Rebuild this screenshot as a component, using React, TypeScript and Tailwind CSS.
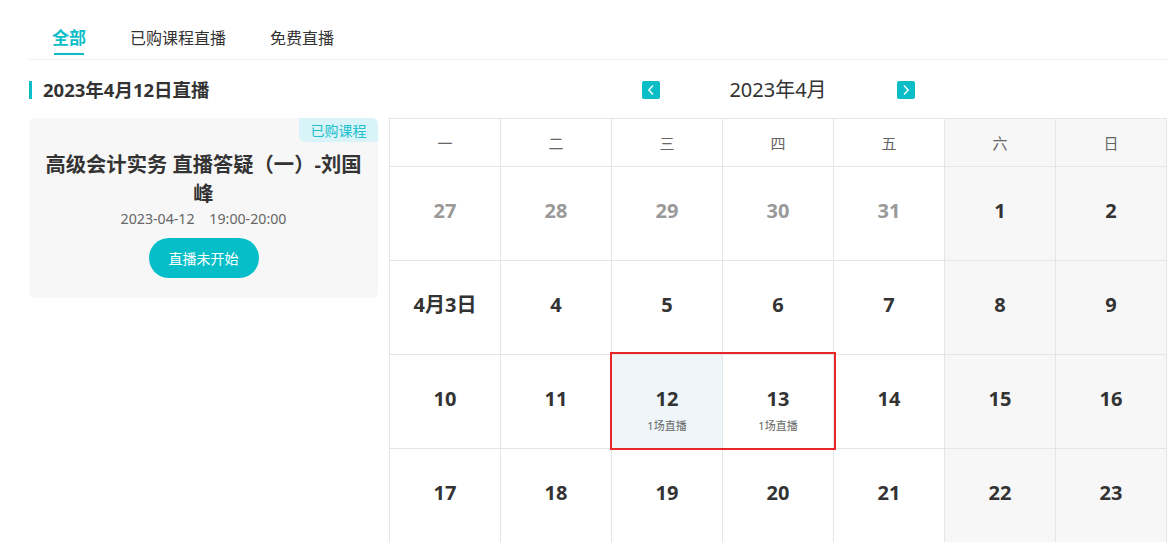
const weekDays = ['一', '二', '三', '四', '五', '六', '日']

type Day = { label: string; muted?: boolean; live?: string; active?: boolean }

const days: Day[] = [
  { label: '27', muted: true },
  { label: '28', muted: true },
  { label: '29', muted: true },
  { label: '30', muted: true },
  { label: '31', muted: true },
  { label: '1' },
  { label: '2' },
  { label: '4月3日' },
  { label: '4' },
  { label: '5' },
  { label: '6' },
  { label: '7' },
  { label: '8' },
  { label: '9' },
  { label: '10' },
  { label: '11' },
  { label: '12', live: '1场直播', active: true },
  { label: '13', live: '1场直播' },
  { label: '14' },
  { label: '15' },
  { label: '16' },
  { label: '17' },
  { label: '18' },
  { label: '19' },
  { label: '20' },
  { label: '21' },
  { label: '22' },
  { label: '23' },
]

const Chevron = ({ dir }: { dir: 'left' | 'right' }) => (
  <button className="w-[18px] h-[18px] rounded-[2px] bg-[#0bbdc7] flex items-center justify-center">
    <svg width="10" height="12" viewBox="0 0 10 12" fill="none">
      <path
        d={dir === 'left' ? 'M7 1.5 L2.8 6 L7 10.5' : 'M3 1.5 L7.2 6 L3 10.5'}
        stroke="white"
        strokeWidth="1.4"
      />
    </svg>
  </button>
)

const App = () => {
  return (
    <div
      className="w-[1169px] h-[542px] overflow-hidden bg-white text-[#333] pl-[29px] pr-[2px]"
      style={{ fontFamily: '"Noto Sans", "Noto Sans CJK SC", sans-serif' }}
    >
      {/* tabs */}
      <div className="h-[60px] flex items-end gap-[44px] pl-[23px] border-b border-[#eeeeee]">
        <div className="relative pb-[4px] text-[17px] font-bold text-[#0bbdc7] leading-[28px]">
          全部
          <div className="h-[2px] bg-[#0bbdc7] mx-[2px] mt-[1px]"></div>
        </div>
        <div className="pb-[7px] text-[16px] leading-[28px] text-[#333]">已购课程直播</div>
        <div className="pb-[7px] text-[16px] leading-[28px] text-[#333]">免费直播</div>
      </div>

      <div className="flex gap-[11px] pt-[21px]">
        {/* left */}
        <div className="w-[349px] shrink-0">
          <div className="flex items-center h-[18px] border-l-[3px] border-[#0bbdc7] pl-[11px]">
            <span className="text-[18.5px] font-bold leading-none text-[#333]">2023年4月12日直播</span>
          </div>
          <div className="mt-[19px] relative bg-[#f7f7f7] rounded-[6px] pt-[32px] pb-[20px] px-[12px] flex flex-col items-center">
            <div className="absolute top-0 right-0 w-[79px] h-[24px] bg-[#d9f4f8] rounded-tr-[6px] rounded-bl-[6px] text-[#20bfcb] text-[14px] flex items-center justify-center">
              已购课程
            </div>
            <div className="text-[20.3px] font-bold text-[#333] leading-[29px] text-center">
              高级会计实务 直播答疑（一）-刘国峰
            </div>
            <div className="text-[14.2px] text-[#666] leading-[20px] mt-[1px]">
              2023-04-12&nbsp;&nbsp;&nbsp;&nbsp;19:00-20:00
            </div>
            <button className="mt-[9px] w-[110px] h-[40px] rounded-full bg-[#06bec8] text-white text-[14px]">
              直播未开始
            </button>
          </div>
        </div>

        {/* calendar */}
        <div className="flex-1">
          <div className="h-[18px] flex items-center justify-center">
            <Chevron dir="left" />
            <div className="w-[237px] text-center text-[20px] text-[#333] leading-none">2023年4月</div>
            <Chevron dir="right" />
          </div>
          <div className="relative mt-[19px]">
            <div className="grid grid-cols-7 border-l border-t border-[#e5e5e5]">
              {weekDays.map((w, i) => (
                <div
                  key={w}
                  className={`h-[48px] flex items-center justify-center border-r border-b border-[#e5e5e5] text-[15px] text-[#666] pt-[2px] ${
                    i >= 5 ? 'bg-[#f7f7f7]' : 'bg-white'
                  }`}
                >
                  {w}
                </div>
              ))}
              {days.map((d, i) => {
                const weekend = i % 7 >= 5
                return (
                  <div
                    key={i}
                    className={`h-[94px] flex items-center justify-center border-r border-b border-[#e5e5e5] ${
                      d.active ? 'bg-[#eef6f9]' : weekend ? 'bg-[#f7f7f7]' : 'bg-white'
                    }`}
                  >
                    <div className="relative mb-[5px]">
                      <div
                        className={`text-[20px] font-bold leading-[28px] ${
                          d.muted ? 'text-[#999]' : 'text-[#333]'
                        }`}
                      >
                        {d.label}
                      </div>
                      {d.live && (
                        <div className="absolute top-full left-1/2 -translate-x-1/2 mt-[6px] whitespace-nowrap text-[11px] text-[#666] leading-[14px]">
                          {d.live}
                        </div>
                      )}
                    </div>
                  </div>
                )
              })}
            </div>
            {/* highlight */}
            <div className="absolute left-[221px] top-[234px] w-[226px] h-[98px] border-2 border-[#e8262a] pointer-events-none"></div>
          </div>
        </div>
      </div>
    </div>
  )
}

export default App
